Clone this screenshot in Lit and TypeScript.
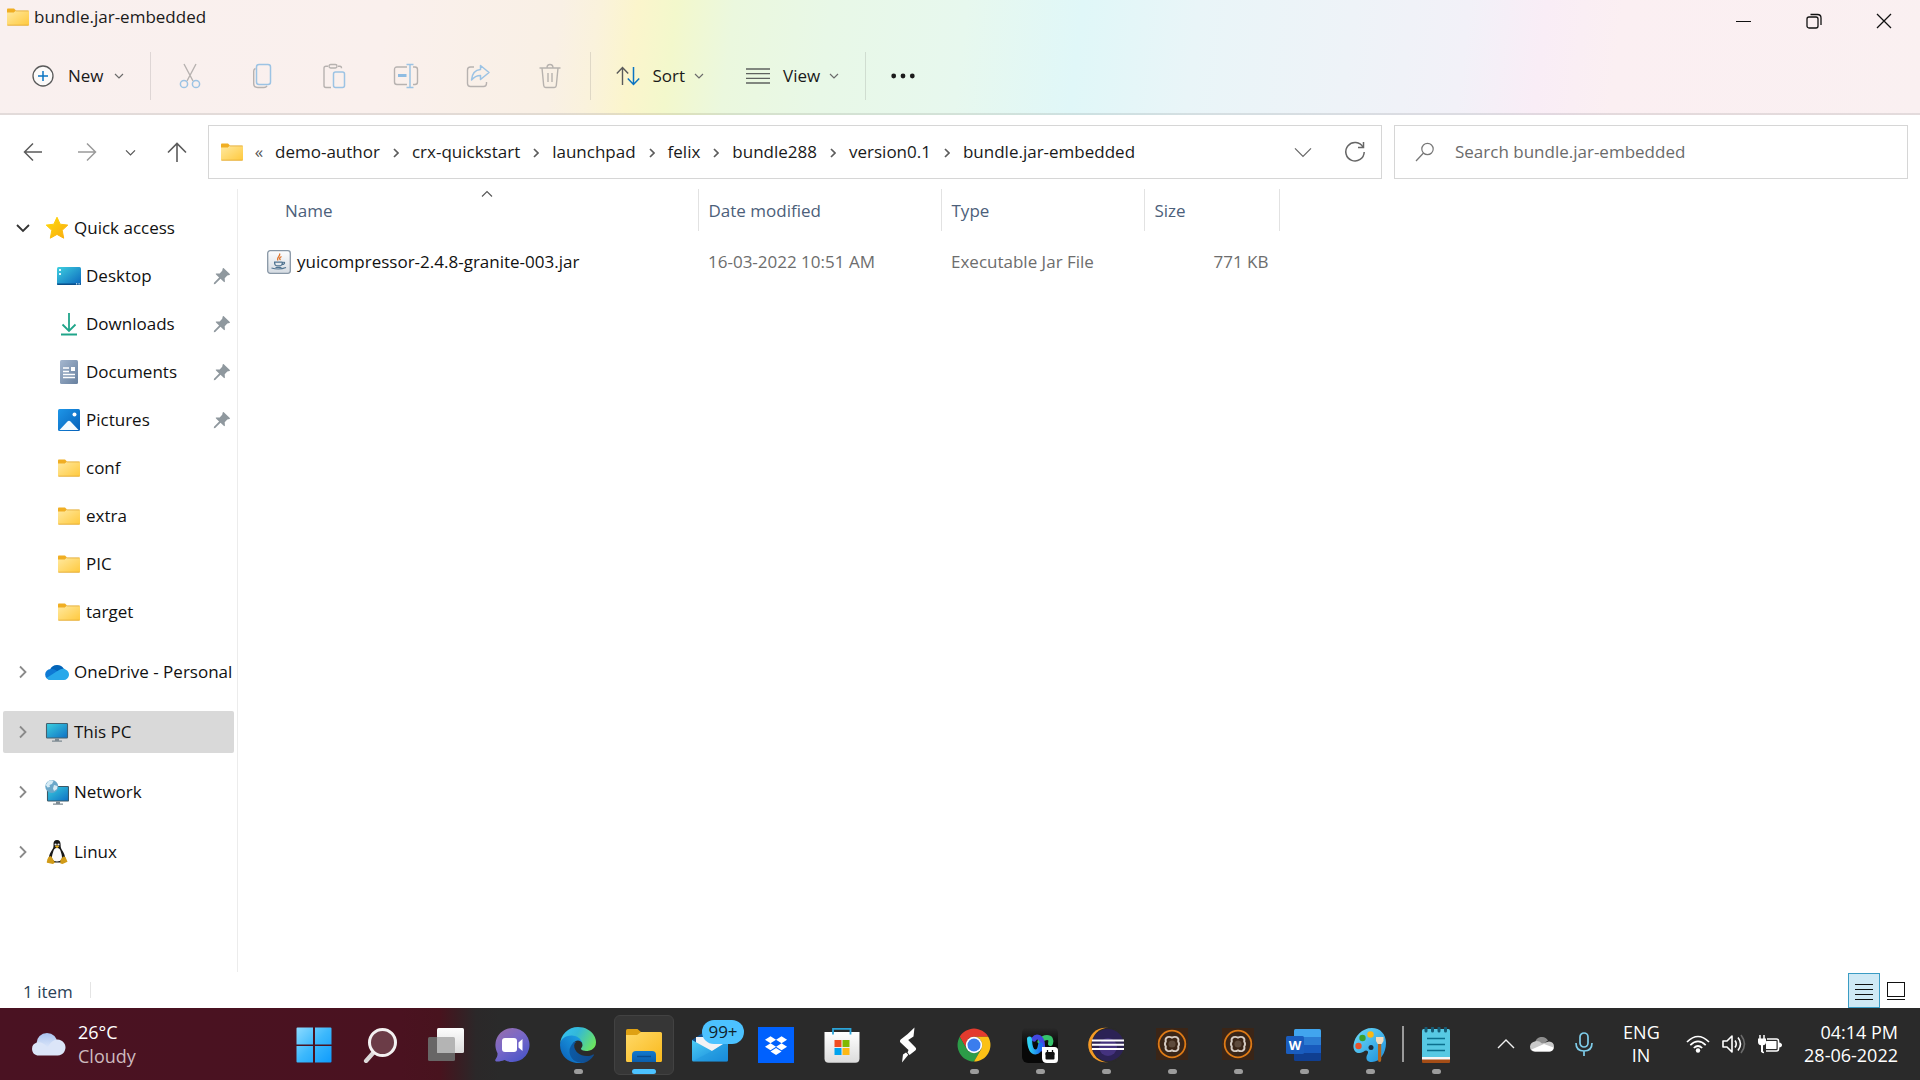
import { LitElement, html, css, svg, nothing, TemplateResult } from "lit";
import { customElement } from "lit/decorators.js";
import { classMap } from "lit/directives/class-map.js";

type Icon = TemplateResult;

const box = (w: number, h: number, body: unknown): Icon =>
  html`<svg width=${w} height=${h} viewBox="0 0 ${w} ${h}" fill="none" aria-hidden="true">${body}</svg>`;

/* ---------- shared glyphs ---------- */

const folder = () => box(22, 18, svg`
  <defs><linearGradient id="fold" x1="0" y1="0" x2="1" y2="1"><stop offset="0" stop-color="#ffe9a0"/><stop offset="1" stop-color="#ffc93d"/></linearGradient></defs>
  <path d="M0 1.2Q0 .4 .8 .4H7l2 2-2 2.6H0z" fill="#f0ae23"/>
  <path d="M0 4.4h7l1.6-1.7H21.200q.8 0 .8.8V16.800q0 .8-.8.8H.8q-.8 0-.8-.8z" fill="url(#fold)"/>
  <path d="M.4 17.200h21.200M8.600 2.900h13" stroke="#e0a733" stroke-width=".8"/>`);

const chevronDown = (size: number) => html`<svg width=${size} height=${size} viewBox="0 0 ${size} ${size}" fill="none" aria-hidden="true"><path d="M1 ${size * 0.3}L${size / 2} ${size * 0.3 + size / 2 - 1}L${size - 1} ${size * 0.3}" stroke="currentColor" stroke-width="1.200"/></svg>`;

const chevronRight = () => box(10, 14, svg`<path d="M2 1.500L7.500 7 2 12.500" stroke="#8a8a8a" stroke-width="1.800"/>`);

const crumbArrow = () => box(6, 10, svg`<path d="M1 1l4 4-4 4" stroke="#5c5c5c" stroke-width="1.700"/>`);

const pin = () => box(18, 18, svg`<path d="M10.800 1.200l6 5.700c.3.300.2.900-.3 1l-2.200.5-2.600 2.800.2 3.300c0 .6-.5.800-.9.500L7.500 11.800 2.200 17 .8 17.200l.2-1.400 5.100-5.200L3 7.400c-.4-.4-.2-.9.300-.9l3.400-.1 2.500-2.600.5-2.300c.1-.5.700-.7 1.100-.3z" fill="#8f989e"/>`);

/* ---------- command bar ---------- */

const iconNew = () => box(22, 22, svg`<circle cx="11" cy="11" r="10" stroke="#5a5a5a" stroke-width="1.300" fill="#fcfaf9"/><path d="M11 6v10M6 11h10" stroke="#0a74c2" stroke-width="1.500"/>`);
const iconCut = () => box(24, 26, svg`<path d="M6 1l9 17M18 1L9 18" stroke="#b7b2b0" stroke-width="1.400"/><circle cx="6" cy="21" r="3.600" stroke="#9cc3e4" stroke-width="1.500"/><circle cx="18" cy="21" r="3.600" stroke="#9cc3e4" stroke-width="1.500"/>`);
const iconCopy = () => box(24, 26, svg`<path d="M5.500 5.500C4 6 3.700 7 3.700 8v12.500q0 4 4 4H14q2 0 3-1.700" stroke="#b7b2b0" stroke-width="1.400"/><rect x="6.500" y="1.500" width="14" height="20" rx="2.500" stroke="#9cc3e4" stroke-width="1.500"/>`);
const iconPaste = () => box(24, 26, svg`<path d="M6 3.200H4Q2 3.200 2 5.200v17.300q0 2 2 2h5M16 3.200h2q1.500 0 1.500 2" stroke="#b7b2b0" stroke-width="1.400"/><rect x="7" y="1.500" width="8" height="3.500" rx="1.700" stroke="#b7b2b0" stroke-width="1.400"/><rect x="11.500" y="9" width="11" height="15.500" rx="2" stroke="#9cc3e4" stroke-width="1.500"/>`);
const iconRename = () => box(26, 26, svg`<path d="M14 4H4Q1.500 4 1.500 6.500v12.500q0 2.500 2.500 2.500h10M20 4h2q2.500 0 2.500 2.500v12.500q0 2.500-2.500 2.500h-2" stroke="#b7b2b0" stroke-width="1.400"/><path d="M13.500 1.500h7M13.500 24.500h7M17 1.500v23" stroke="#9cc3e4" stroke-width="1.500"/><path d="M5 12.500h8.500" stroke="#8fbce2" stroke-width="3"/>`);
const iconShare = () => box(26, 26, svg`<path d="M9 4H5.500Q2.500 4 2.500 7v13.500q0 3 3 3h13q3 0 3-3V19" stroke="#b7b2b0" stroke-width="1.400"/><path d="M15.500 2.500l8.500 7-8.500 7v-4c-4 0-6.500 1.500-9 4.500.5-6 3.500-10 9-10.500z" stroke="#9cc3e4" stroke-width="1.500" stroke-linejoin="round"/>`);
const iconDelete = () => box(24, 26, svg`<path d="M1.500 5h21M4 5l1.700 17.500q.2 2 2 2h8.600q1.800 0 2-2L20 5M9 5q0-3.500 3-3.500T15 5M10 10v9M14 10v9" stroke="#b7b2ae" stroke-width="1.400"/>`);
const iconSort = () => box(24, 20, svg`<path d="M6.500 19V1.500M.8 7.500l5.700-6 5.700 6" stroke="#5a5a5a" stroke-width="1.400"/><path d="M17.500 1v17.500M11.800 12.500l5.700 6 5.700-6" stroke="#0a74c2" stroke-width="1.500"/>`);
const iconView = () => box(24, 16, svg`<path d="M0 1h24M0 5.700h24M0 10.400h24M0 15h24" stroke="#5f625f" stroke-width="1.300"/>`);
const iconMore = () => box(24, 6, svg`<circle cx="2.700" cy="3" r="2.400" fill="#1b1b1b"/><circle cx="12" cy="3" r="2.400" fill="#1b1b1b"/><circle cx="21.300" cy="3" r="2.400" fill="#1b1b1b"/>`);

/* ---------- navigation row ---------- */

const iconBack = () => box(20, 20, svg`<path d="M19 10H1.500M10 1.500L1.500 10l8.500 8.500" stroke="#5b5b5b" stroke-width="1.500"/>`);
const iconForward = () => box(20, 20, svg`<path d="M1 10h17.500M10 1.500l8.500 8.500-8.500 8.500" stroke="#9a9a9a" stroke-width="1.500"/>`);
const iconUp = () => box(20, 20, svg`<path d="M10 20V1.500M1 10.500l9-9 9 9" stroke="#5b5b5b" stroke-width="1.600"/>`);
const iconRefresh = () => box(22, 22, svg`<path d="M19 6.200A9.200 9.200 0 1 0 20.200 11" stroke="#666" stroke-width="1.500"/><path d="M19.500 1v5.500H14" stroke="#666" stroke-width="1.500"/>`);
const iconSearch = () => box(20, 20, svg`<circle cx="12.500" cy="7" r="5.700" stroke="#777" stroke-width="1.200"/><path d="M8.500 11L1 19" stroke="#777" stroke-width="1.200"/>`);

/* ---------- tree ---------- */

const iconStar = () => box(24, 24, svg`<defs><linearGradient id="st" x1="0" y1="0" x2="1" y2="1"><stop offset="0" stop-color="#ffdb0a"/><stop offset="1" stop-color="#f9ab10"/></linearGradient></defs><path d="M12 1.200l3.200 7 7.600.9-5.600 5.200 1.500 7.900-6.700-3.800-6.700 3.800 1.500-7.900L1.200 9.100l7.600-.9z" fill="url(#st)" stroke="url(#st)" stroke-width="1" stroke-linejoin="round"/>`);
const iconDesktop = () => box(24, 20, svg`<defs><linearGradient id="dk" x1="0" y1="0" x2="1" y2="1"><stop offset="0" stop-color="#3ed0e0"/><stop offset="1" stop-color="#0b66bd"/></linearGradient></defs><rect y="1" width="24" height="18" rx="1.500" fill="url(#dk)"/><path d="M0 17.500h24v.5a1 1 0 0 1-1 1H1a1 1 0 0 1-1-1z" fill="#0a4f8a"/><path d="M2 3h2v2H2zM2 7h2v2H2zM19 17.300h1.200v1.200H19zM21.500 17.300h1.200v1.200h-1.200z" fill="#dff6ff"/>`);
const iconDownloads = () => box(24, 24, svg`<path d="M12 1v18M5.500 12.500l6.500 6.500 6.500-6.500M4 22.500h16" stroke="#20a58a" stroke-width="1.800"/>`);
const iconDocuments = () => box(24, 24, svg`<defs><linearGradient id="dc" x1="0" y1="0" x2="1" y2="1"><stop offset="0" stop-color="#a5b7cf"/><stop offset="1" stop-color="#67809f"/></linearGradient></defs><rect x="3" width="18" height="24" rx="1.500" fill="url(#dc)"/><path d="M6 8h6M6 11.500h6M6 14.500h12M6 17.500h12" stroke="#fff" stroke-width="1.300"/><rect x="14" y="7" width="4" height="4" fill="#fff"/>`);
const iconPictures = () => box(24, 24, svg`<defs><linearGradient id="pc" x1="0" y1="0" x2="1" y2="1"><stop offset="0" stop-color="#1e96e8"/><stop offset="1" stop-color="#0560b8"/></linearGradient></defs><rect x="1" y="1" width="22" height="22" rx="1.500" fill="url(#pc)"/><path d="M2.500 22l8-8.600q1.500-1.500 3 0l8 8.600z" fill="#f4fafe"/><circle cx="17.500" cy="6.500" r="2" fill="#fff"/>`);
const iconOneDrive = () => box(24, 16, svg`<path d="M5 5.500A8 8 0 0 1 19 5l-5 6z" fill="#0364b8"/><path d="M5.500 5.100c2-.3 3.600.1 5 .9l6 4-11 5.800A5.300 5.300 0 0 1 5.500 5.100z" fill="#0f7ad4"/><path d="M12 7.300l3.500-2c2.500-1.200 5-.2 5.300.500 2.500 1 3.700 3.700 3 6.200-.6 2.400-2.600 3.900-4.800 3.900H5.300c-1.600 0-2.800-.7-3.800-1.900z" fill="#28a8ea"/>`);
const monitor = svg`<defs><linearGradient id="mo" x1="0" y1="0" x2="1" y2="1"><stop offset="0" stop-color="#3bd0df"/><stop offset="1" stop-color="#0e6fc4"/></linearGradient></defs>`;
const iconPC = () => box(24, 20, svg`${monitor}<rect x="1.500" y="1.500" width="21" height="14.500" rx=".8" fill="url(#mo)" stroke="#45606f" stroke-width="1.100"/><path d="M10 16.500h4v2h3v1.200H7v-1.200h3z" fill="#7e8a92"/>`);
const iconNetwork = () => box(24, 26, svg`${monitor}<rect x="2.500" y="7.500" width="21" height="14.500" rx=".8" fill="url(#mo)" stroke="#3b5868" stroke-width="1.100"/><path d="M11 22.500h4v2h3v1.200H8v-1.200h3z" fill="#7e8a92"/><circle cx="6.800" cy="7.500" r="6.500" fill="#6aa7c9"/><path d="M3 2.500q3-2 5.500-.5L7 5 4.500 6 5 8l-2.500.5L.8 6zM9 6l3.500 1-.5 3-3 2-1-2.500z" fill="#d6ebf5"/>`);
const iconLinux = () => box(24, 26, svg`<path d="M12 1c-2.600 0-3.700 2-3.500 4.500.2 2.600-.3 3.800-1.800 6C5.200 13.700 4 16 4 19l3 4.500h10L20 19c0-3-1.200-5.300-2.700-7.500-1.400-2.200-1.700-3.400-1.700-6C15.600 3 14.600 1 12 1z" fill="#171717"/><path d="M12 9c-2.500 0-3.500 2-4 4.500-.8 2.500-1.600 5-.5 7 1.200 2.500 7.800 2.500 9 0 1-2 .3-4.500-.5-7C15.500 11 14.500 9 12 9z" fill="#fbfbfb"/><circle cx="10.600" cy="5.500" r="1.100" fill="#eee"/><circle cx="13.500" cy="5.500" r="1.100" fill="#eee"/><path d="M9.800 7.300L12 6.200l2.300 1.100L12 9.200z" fill="#e3ad1c"/><path d="M3.500 18l2.500-1 4 6.500-2 1.500-6-1.200c-.7-.4.300-1.700.2-3zM20.500 18L18 17.500l-2.800 4 .3 3 2 .5 5-2.200z" fill="#d19b18"/>`);
const iconJar = () => box(24, 24, svg`<defs><linearGradient id="jr" x1="0" y1="0" x2="0" y2="1"><stop offset="0" stop-color="#fdfdfe"/><stop offset="1" stop-color="#d5dbe2"/></linearGradient></defs><rect x=".7" y=".7" width="22.600" height="22.600" rx="2.500" fill="url(#jr)" stroke="#8897a6" stroke-width="1.300"/><path d="M12.500 3.500c1.500 2.500-3.500 4-1.500 7M14.500 6.500c-2 1-2.500 2-1 3.500" stroke="#e0762e" stroke-width="1.300"/><path d="M7 12.200h8.500M7.500 12.500q.3 3.300 2.500 3.300h3q2 0 2.500-3.300M15.500 12.500q2.500-.8 2 .7t-2.700 1.400M4.500 18q7.500 2.200 14.500-.5M8.500 17.500h6" stroke="#4f7390" stroke-width="1.200"/>`);

/* ---------- taskbar apps, each on a 36px grid ---------- */

const appStart = () => box(36, 36, svg`<defs><linearGradient id="wn" x1="0" y1="0" x2="36" y2="36" gradientUnits="userSpaceOnUse"><stop offset="0" stop-color="#8fdcff"/><stop offset=".5" stop-color="#3cb8fc"/><stop offset="1" stop-color="#0d9afc"/></linearGradient></defs><path d="M1.500.500H17v17H.5v-16a1 1 0 0 1 1-1zM19 .5h15.500a1 1 0 0 1 1 1v16H19zM.5 19H17v16.500H1.500a1 1 0 0 1-1-1zM19 19h16.500v15.500a1 1 0 0 1-1 1H19z" fill="url(#wn)"/>`);
const appSearch = () => box(36, 36, svg`<path d="M11.500 25.500L4 34" stroke="#dcdada" stroke-width="4.200" stroke-linecap="round"/><circle cx="20.500" cy="15.500" r="13" fill="#6b3c47" stroke="#f3f1f1" stroke-width="3"/>`);
const appTasks = () => box(36, 36, svg`<defs><linearGradient id="tv" x1="0" y1="0" x2="0" y2="1"><stop offset="0" stop-color="#fdfdfd"/><stop offset="1" stop-color="#dcdcdc"/></linearGradient></defs><rect y="10" width="27" height="24" rx="1.500" fill="#686666"/><rect x="9" y="1" width="27" height="25" rx="1.500" fill="url(#tv)"/><path d="M9 10h16.500a1.500 1.500 0 0 1 1.500 1.500V26H10.500A1.500 1.500 0 0 1 9 24.500z" fill="#b4b4b4"/>`);
const appChat = () => box(36, 36, svg`<defs><linearGradient id="ch" x1="0" y1="0" x2=".7" y2="1"><stop offset="0" stop-color="#9a6fa8"/><stop offset=".5" stop-color="#7a68c8"/><stop offset="1" stop-color="#4c56c8"/></linearGradient></defs><path d="M18.500 1a17 17 0 1 1-8 32c-3 1.200-6 1.800-8.300 1.400C1 34.200 1 33 1.600 32.200c1.500-2 2-3.800 1.900-6A17 17 0 0 1 18.500 1z" fill="url(#ch)"/><rect x="8" y="11" width="15" height="14" rx="3" fill="#fff"/><path d="M24.500 15.500L28.500 12v12l-4-3.500z" fill="#fff"/>`);
const appEdge = () => html`<svg width="36" height="36" viewBox="0 0 256 256" aria-hidden="true">
  <defs><linearGradient id="e1" x1=".1" y1=".5" x2="1" y2=".6"><stop offset="0" stop-color="#0c59a4"/><stop offset="1" stop-color="#114a8b"/></linearGradient>
  <linearGradient id="e2" x1=".9" y1=".2" x2=".2" y2="1"><stop offset="0" stop-color="#1b9de2"/><stop offset=".5" stop-color="#1481cf"/><stop offset="1" stop-color="#0b62ba"/></linearGradient>
  <linearGradient id="e3" x1="0" y1=".3" x2="1" y2=".7"><stop offset="0" stop-color="#35c1f1"/><stop offset=".4" stop-color="#33b8d8"/><stop offset="1" stop-color="#6ee65c"/></linearGradient></defs>
  <path fill="url(#e1)" d="M235.700 195.500a93.700 93.700 0 0 1-10.500 4.700 101.900 101.900 0 0 1-35.900 6.400c-47.300 0-88.500-32.500-88.500-74.300a31.500 31.500 0 0 1 16.400-27.300c-42.800 1.800-53.800 46.400-53.800 72.500 0 74 68.100 81.400 82.800 81.400 7.900 0 19.800-2.300 27-4.600l1.300-.4a128.300 128.300 0 0 0 66.600-52.800 4 4 0 0 0-5.400-5.600z"/>
  <path fill="url(#e2)" d="M105.700 241.400a79.200 79.200 0 0 1-22.700-21.300 80.700 80.700 0 0 1 29.500-120c3.200-1.500 8.500-4.100 15.600-4a32.400 32.400 0 0 1 25.700 13 31.900 31.900 0 0 1 6.300 18.700c0-.2 24.500-79.600-80-79.600-43.900 0-80 41.600-80 78.200a130.200 130.200 0 0 0 12.100 56 128 128 0 0 0 156.400 67 75.500 75.500 0 0 1-62.800-8z"/>
  <path fill="url(#e3)" d="M152.300 148.900c-.8 1-3.300 2.500-3.300 5.700 0 2.600 1.700 5.100 4.700 7.200 14.400 10 41.500 8.700 41.600 8.700a59.600 59.600 0 0 0 30.300-8.300A61.400 61.400 0 0 0 256 109.200c.3-22.400-8-37.300-11.300-43.900C223.500 23.900 177.700 0 128 0A128 128 0 0 0 0 126.200c.5-36.500 36.800-66 80-66 3.500 0 23.500.3 42 10a72.600 72.600 0 0 1 30.900 29.300c6.100 10.600 7.200 24.100 7.200 29.500s-2.700 13.300-7.800 19.900z"/></svg>`;
const appExplorer = () => box(36, 36, svg`<defs><linearGradient id="ex" x1="0" y1="0" x2="1" y2="1"><stop offset="0" stop-color="#ffd968"/><stop offset="1" stop-color="#f9b91c"/></linearGradient><linearGradient id="ex2" x1="0" y1="0" x2="0" y2="1"><stop offset="0" stop-color="#1279ce"/><stop offset="1" stop-color="#0b5fae"/></linearGradient></defs><path d="M0 3.500Q0 2 1.500 2h10l4 3.500V12H0z" fill="#dfa113"/><path d="M0 8h11l4-3h19.500Q36 5 36 6.500v27q0 1.500-1.500 1.500h-33Q0 35 0 33.500z" fill="url(#ex)"/><path d="M6 35v-7q0-4 4-4h16q4 0 4 4v7z" fill="url(#ex2)"/><path d="M11 29.500h14" stroke="#0a4c8e" stroke-width="1.400"/>`);
const appMail = () => box(36, 36, svg`<defs><linearGradient id="ml" x1="0" y1="0" x2="1" y2="1"><stop offset="0" stop-color="#4ccdf5"/><stop offset="1" stop-color="#1283d8"/></linearGradient></defs><path d="M0 13L12 5h12l12 8v6H0z" fill="#0f4f8c"/><path d="M4 10h28v10l-13 6L4 16z" fill="#f2f2f4"/><path d="M0 13l20 11L36 14v19q0 1.500-1.500 1.500h-33Q0 34.500 0 33z" fill="url(#ml)"/><path d="M1 34L20 24 36 14v19q0 1.500-1.500 1.500z" fill="#1f95dc" opacity=".45"/>`);
const appDropbox = () => box(36, 36, svg`<rect width="36" height="36" fill="#0061fe"/><g transform="translate(7 7.500) scale(.92)"><path fill="#fff" d="M6 1.807L0 5.629l6 3.822 6.001-3.822zM18 1.807l-6 3.822 6 3.822 6-3.822zM0 13.274l6 3.822 6.001-3.822L6 9.452zM18 9.452l-6 3.822 6 3.822 6-3.822zM6 18.371l6.001 3.822 6-3.822-6-3.822z"/></g>`);
const appStore = () => box(36, 36, svg`<defs><linearGradient id="sr" x1="0" y1="0" x2="0" y2="1"><stop offset="0" stop-color="#fff"/><stop offset="1" stop-color="#dcdcdc"/></linearGradient></defs><path d="M.5 5h35v26.500q0 4.200-4.200 4.200H4.700q-4.200 0-4.200-4.200z" fill="url(#sr)"/><path d="M9 7.500V1.800h17.500v5.700" stroke="#2ba4d9" stroke-width="1.800"/><path fill="#f04e23" d="M10.500 13h7v7h-7z"/><path fill="#80b900" d="M18.500 13h7v7h-7z"/><path fill="#00a3ee" d="M10.500 21h7v7h-7z"/><path fill="#fdb813" d="M18.500 21h7v7h-7z"/>`);
const appSwift = () => box(36, 36, svg`<path fill="#fff" d="M24.500.500l-1 9-5.300 3.500 7.300 7.500c.9 1 .8 2-.2 3l-5.800 4.500-2-2.500 1-2.500L10.500 15.500c-.8-1-.7-2 .2-3l7-5.500zM12 35.500l1-8 3-2 2.300 2.200z"/>`);
const appChrome = () => html`<svg width="36" height="36" viewBox="0 0 48 48" aria-hidden="true"><path fill="#e33b2e" d="M24 13h19A22 22 0 0 0 5 13l9.500 16.500A11 11 0 0 1 24 13z"/><path fill="#2c9c48" d="M14.500 29.500L5 13a22 22 0 0 0 19 33l9.500-16.500a11 11 0 0 1-19 0z"/><path fill="#fbc116" d="M33.500 29.500L24 46a22 22 0 0 0 19-33H24a11 11 0 0 1 9.500 16.500z"/><circle cx="24" cy="24" r="11" fill="#fff"/><circle cx="24" cy="24" r="8.700" fill="#3b7ded"/></svg>`;
const appWebex = () => box(36, 36, svg`<defs><linearGradient id="wx" x1="0" y1="0" x2="0" y2="1"><stop offset="0" stop-color="#2b2b2b"/><stop offset=".5" stop-color="#080808"/></linearGradient><linearGradient id="wy" x1="0" y1="0" x2="1" y2="0"><stop offset="0" stop-color="#2fd0f2"/><stop offset="1" stop-color="#1a6df0"/></linearGradient></defs><rect width="36" height="36" rx="6" fill="url(#wx)"/>
  <path d="M18 14.500q3-4 7-4 5 0 3.500 6" stroke="#35c46c" stroke-width="5" stroke-linecap="round"/>
  <path d="M12 12q2-3 5-1.500 3.500 2 3.500 8 0 5 3 6" stroke="#4348e0" stroke-width="5" stroke-linecap="round"/>
  <path d="M7.500 12q.5 13 6 13 4 0 5-7" stroke="url(#wy)" stroke-width="5" stroke-linecap="round"/>
  <path d="M20 20h12.500q3.500 0 3.500 3.500v9q0 3.500-3.500 3.500H25q-5 0-5-5z" fill="#fff"/><rect x="23.500" y="25" width="9" height="7.500" rx="1" fill="#111"/><path d="M25.500 23v2M30.500 23v2M23.500 27h9" stroke="#111" stroke-width="1.300"/>`);
const appEclipse = () => box(36, 36, svg`<circle cx="17.500" cy="18" r="17.300" fill="#f59a26"/><circle cx="20.700" cy="18" r="17.300" fill="#2a2a2a"/><circle cx="20" cy="18" r="16" fill="#2c2255"/><circle cx="20" cy="20" r="9" fill="#44327e"/><path d="M4 13.500H36M4 17.800h32M4 22H36" stroke="#fff" stroke-width="2"/>`);
const appQuickstart = () => box(36, 36, svg`<rect x="2" y="1" width="32" height="32" fill="#3a2517"/><circle cx="18" cy="17" r="13.300" stroke="#dd7a16" stroke-width="1.800"/><circle cx="18" cy="17" r="3.600" fill="#5d4a3c"/><path d="M13.500 10.200q2-.9 4.500.5 2.500-1.400 4.500-.5 2.700 1.300 1.700 4.300 1.800 2.500 0 5 1 3-1.700 4.300-2 .9-4.500-.5-2.500 1.400-4.500.5-2.700-1.300-1.700-4.300-1.800-2.500 0-5-1-3 1.700-4.300z" stroke="#d6ccc4" stroke-width="1.900"/>`);
const appWord = () => box(36, 36, svg`<path d="M8 10V3.500Q8 2 9.500 2h24Q35 2 35 3.500V10z" fill="#41a5ee"/><path d="M8 10h27v8H8z" fill="#2b7cd3"/><path d="M8 18h27v8H8z" fill="#185abd"/><path d="M8 26h27v6.500q0 1.500-1.500 1.500h-24Q8 34 8 32.500z" fill="#103f91"/><rect y="9" width="18" height="18" rx="1.500" fill="#1a5dbe"/><text x="9" y="23" text-anchor="middle" font-family="Open Sans, sans-serif" font-weight="700" font-size="13" fill="#fff">W</text>`);
const appPaint = () => box(36, 36, svg`<defs><linearGradient id="pn" x1="0" y1="0" x2="1" y2="1"><stop offset="0" stop-color="#6fdcf9"/><stop offset="1" stop-color="#1b8fdc"/></linearGradient></defs><path d="M20 1c8 0 14 6 14 15 0 10-6 19-14 19-4 0-6-2-5.500-5 .4-2.500 2.500-4.500 1-6-2-2-4 1.500-7.500 2-4.500.5-7-3-6.500-8C2.500 9 10 1 20 1z" fill="url(#pn)"/><circle cx="6.500" cy="19" r="3.200" fill="#e8522a"/><circle cx="10.500" cy="11" r="3.200" fill="#3aa12c"/><circle cx="18.500" cy="7.500" r="3.200" fill="#fcb813"/><circle cx="19" cy="20.500" r="2.500" fill="#1b2d3d"/><path d="M26 16h3.200v17q0 2-1.600 2T26 33z" fill="#b4651d"/><path d="M24 10h7.500v4l-1.800 3h-4L24 14z" fill="#f1dcc0"/>`);
const appNotepad = () => box(36, 36, svg`<rect x="4" y="31" width="28" height="5" rx="1" fill="#a44d16"/><path d="M4 28h28v4.500H4z" fill="#f6f6f6"/><path d="M4 3.500Q4 2 5.500 2h25Q32 2 32 3.500V30H4z" fill="#57c9e3"/><path d="M9 11.500h18M9 17.500h18M9 23.500h18" stroke="#0b6f8d" stroke-width="1.700"/><path d="M8 1v3M14.500 1v3M21 1v3M27.500 1v3" stroke="#155b75" stroke-width="3" stroke-linecap="round"/>`);

/* ---------- tray ---------- */

const weatherCloud = () => box(36, 24, svg`<defs><linearGradient id="wc" x1="0" y1="0" x2="0" y2="1"><stop offset="0" stop-color="#a9c3f0"/><stop offset="1" stop-color="#f2f6fd"/></linearGradient></defs><circle cx="17" cy="11.500" r="10.500" fill="url(#wc)"/><path d="M7 10.500a6.700 6.700 0 0 0 .2 13h20.500a8 8 0 1 0-5.500-14c-2 1.500-3 3-4.500 6C15 12 11 9.800 7 10.500z" fill="#dbe5f8"/>`);
const trayCaret = () => box(18, 10, svg`<path d="M1 9l8-8 8 8" stroke="#f2f2f2" stroke-width="1.400"/>`);
const trayCloud = () => box(24, 16, svg`<path d="M5 7A7 7 0 0 1 18 4.500l-6 4z" fill="#8e8e8e"/><path d="M5.500 5.200q3.500-.6 6.500 2.300l7-2q5 .5 5 5t-4.500 5H5Q0 15.500 0 10.500q.5-4.500 5.500-5.300z" fill="#c9c9c9"/><path d="M1.500 13.500L14 8l9.500 3.500q-.5 4-4 4H5q-2 0-3.500-2z" fill="#fff"/>`);
const trayMic = () => box(18, 24, svg`<rect x="5" y="1" width="8" height="14" rx="4" stroke="#7fcdea" stroke-width="1.700"/><path d="M1 11q0 8 8 8t8-8M9 19v5" stroke="#7fcdea" stroke-width="1.700"/>`);
const trayWifi = () => box(24, 18, svg`<path d="M1 7Q12-4 23 7M4.300 10.200q7.700-7.500 15.400 0M7.800 13q4.200-4 8.400 0" stroke="#fff" stroke-width="1.700"/><circle cx="12" cy="15.500" r="2.200" fill="#fff"/>`);
const trayVolume = () => box(24, 20, svg`<path d="M1 7h4l5-5v16l-5-5H1z" stroke="#fff" stroke-width="1.600" stroke-linejoin="round"/><path d="M13 6.500q2.500 3.500 0 7M16 3.500q5 6.500 0 13" stroke="#fff" stroke-width="1.600"/><path d="M19 1q7 9 0 18" stroke="#6b6b6b" stroke-width="1.600"/>`);
const trayBattery = () => box(24, 20, svg`<path d="M9 5h9.500q2 0 2 2v8q0 2-2 2H8" stroke="#fff" stroke-width="1.600"/><rect x="8" y="7" width="10.500" height="8" rx=".5" fill="#fff"/><path d="M21 8.500q3 .5 3 2.500t-3 2.500z" fill="#fff"/><path d="M0 4.500h8V8q0 3-3 3.300V18H3v-6.700Q0 11 0 8z" fill="#fff"/><path d="M2 1v4M6 1v4M4 17q0 1.500 2 1.500" stroke="#fff" stroke-width="1.500"/>`);
const iconDetails = () => box(18, 18, svg`<path d="M0 2.500h18M0 7.500h18M0 12.500h18M0 17.500h18" stroke="#111" stroke-width="1"/>`);
const iconThumbs = () => box(18, 18, svg`<rect x=".5" y=".5" width="17" height="14" stroke="#111"/><path d="M0 17.500h18" stroke="#111"/>`);

interface TreeItem { label: string; icon: () => Icon; pinned?: boolean; group?: "open" | "closed"; selected?: boolean }

const TREE: TreeItem[] = [
  { label: "Quick access", icon: iconStar, group: "open" },
  { label: "Desktop", icon: iconDesktop, pinned: true },
  { label: "Downloads", icon: iconDownloads, pinned: true },
  { label: "Documents", icon: iconDocuments, pinned: true },
  { label: "Pictures", icon: iconPictures, pinned: true },
  { label: "conf", icon: folder },
  { label: "extra", icon: folder },
  { label: "PIC", icon: folder },
  { label: "target", icon: folder },
  { label: "OneDrive - Personal", icon: iconOneDrive, group: "closed" },
  { label: "This PC", icon: iconPC, group: "closed", selected: true },
  { label: "Network", icon: iconNetwork, group: "closed" },
  { label: "Linux", icon: iconLinux, group: "closed" },
];

const PATH = ["demo-author", "crx-quickstart", "launchpad", "felix", "bundle288", "version0.1", "bundle.jar-embedded"];

const FILES = [
  { name: "yuicompressor-2.4.8-granite-003.jar", date: "16-03-2022 10:51 AM", type: "Executable Jar File", size: "771 KB" },
];

const EDIT_TOOLS: [string, () => Icon][] = [
  ["Cut", iconCut], ["Copy", iconCopy], ["Paste", iconPaste],
  ["Rename", iconRename], ["Share", iconShare], ["Delete", iconDelete],
];

interface App { name: string; icon: () => Icon; state?: "running" | "active"; badge?: string; divided?: boolean }

const APPS: App[] = [
  { name: "Start", icon: appStart },
  { name: "Search", icon: appSearch },
  { name: "Task view", icon: appTasks },
  { name: "Chat", icon: appChat },
  { name: "Edge", icon: appEdge, state: "running" },
  { name: "File Explorer", icon: appExplorer, state: "active" },
  { name: "Mail", icon: appMail, badge: "99+" },
  { name: "Dropbox", icon: appDropbox },
  { name: "Store", icon: appStore },
  { name: "Shortcuts", icon: appSwift },
  { name: "Chrome", icon: appChrome, state: "running" },
  { name: "Webex", icon: appWebex, state: "running" },
  { name: "Eclipse", icon: appEclipse, state: "running" },
  { name: "Author server", icon: appQuickstart, state: "running" },
  { name: "Publish server", icon: appQuickstart, state: "running" },
  { name: "Word", icon: appWord, state: "running" },
  { name: "Paint", icon: appPaint, state: "running" },
  { name: "Notepad", icon: appNotepad, state: "running", divided: true },
];

const reset = css`
  * { box-sizing: border-box; }
  button, input { font: inherit; color: inherit; background: none; border: 0; padding: 0; margin: 0; }
  button { display: flex; align-items: center; justify-content: center; }
  a { color: inherit; text-decoration: none; }
  svg { display: block; flex: none; }
`;

@customElement("explorer-header")
class ExplorerHeader extends LitElement {
  static styles = [reset, css`
    :host {
      display: block;
      border-bottom: 2px solid rgba(90, 90, 90, 0.14);
      background: linear-gradient(97deg, #f9f0ef 0%, #faf0ed 20%, #f9f0e5 29%, #faf2dc 31%, #fbf5cc 33%, #f3f8cc 35%, #ebf8de 38%, #e8f8e7 43%, #e7f8ee 50%, #e0f7f8 56%, #e9f5f8 62%, #eef3f8 70%, #f2f1f8 76%, #f9edf6 80%, #fbeff2 84%, #faf0f1 100%);
    }
    .title-bar { display: flex; justify-content: space-between; height: 38px; padding-left: 7px; }
    h1 { display: flex; align-items: center; gap: 5px; height: 34px; margin: 0; font-size: 17px; font-weight: 400; }
    .window { display: flex; padding-right: 1px; }
    .window button { width: 70px; height: 42px; }
    .commands { display: flex; align-items: center; height: 75px; padding-left: 32px; }
    .menu { gap: 14px; }
    .menu svg:last-child { margin-left: -4px; color: #6b6b6b; }
    .rule { width: 1px; height: 48px; background: rgba(90, 90, 90, 0.17); }
    .tools { display: flex; padding: 0 4px 0 3px; }
    .tools button { width: 72px; height: 48px; }
    .new { margin-right: 26px; }
    .sort { gap: 13px; margin: 0 42px 0 25px; }
    .view { gap: 13px; margin-right: 26px; }
    .more { width: 74px; height: 48px; }
  `];

  render() {
    return html`
      <div class="title-bar">
        <h1>${folder()}<span>bundle.jar-embedded</span></h1>
        <div class="window">
          <button aria-label="Minimize">${box(16, 16, svg`<path d="M0 8.500h15" stroke="#111"/>`)}</button>
          <button aria-label="Restore">${box(16, 16, svg`<rect x="1" y="4" width="11" height="11" rx="2" stroke="#111" stroke-width="1.300"/><path d="M4.500 1.500h7q3.500 0 3.500 3.500v7" stroke="#111" stroke-width="1.300"/>`)}</button>
          <button aria-label="Close">${box(16, 16, svg`<path d="M1 1l14 14M15 1L1 15" stroke="#111" stroke-width="1.300"/>`)}</button>
        </div>
      </div>
      <div class="commands">
        <button class="menu new">${iconNew()}<span>New</span>${chevronDown(10)}</button>
        <div class="rule"></div>
        <div class="tools">${EDIT_TOOLS.map(([name, icon]) => html`<button aria-label=${name} disabled>${icon()}</button>`)}</div>
        <div class="rule"></div>
        <button class="menu sort">${iconSort()}<span>Sort</span>${chevronDown(10)}</button>
        <button class="menu view">${iconView()}<span>View</span>${chevronDown(10)}</button>
        <div class="rule"></div>
        <button class="more" aria-label="See more">${iconMore()}</button>
      </div>`;
  }
}

@customElement("explorer-address")
class ExplorerAddress extends LitElement {
  static styles = [reset, css`
    :host { display: grid; grid-template-columns: 184px 1174fr 514fr; column-gap: 12px; padding: 10px 12px; }
    .history { display: flex; align-items: center; }
    .history button { height: 40px; }
    .back { width: 42px; }
    .forward { width: 66px; }
    .recent { width: 20px; color: #555; }
    .up { width: 38px; margin-left: 18px; }
    .field { display: flex; align-items: center; height: 54px; border: 1px solid #d6d6d6; background: #fff; min-width: 0; }
    .path { padding-left: 12px; }
    .path ol { display: flex; align-items: center; flex: 1; margin: 0; padding: 0; list-style: none; }
    .path li { display: flex; align-items: center; }
    .path li svg { margin: 2px 13px 0 13px; }
    .overflow { width: 32px; color: #555; text-align: center; }
    .path button { width: 52px; height: 52px; color: #666; }
    .search { padding: 0 20px; gap: 20px; }
    .search input { flex: 1; min-width: 0; outline: 0; }
    .search input::placeholder { color: #6b6b6b; opacity: 1; }
  `];

  render() {
    return html`
      <div class="history">
        <button class="back" aria-label="Back">${iconBack()}</button>
        <button class="forward" aria-label="Forward">${iconForward()}</button>
        <button class="recent" aria-label="Recent locations">${chevronDown(11)}</button>
        <button class="up" aria-label="Up">${iconUp()}</button>
      </div>
      <nav class="field path" aria-label="Address">
        ${folder()}<span class="overflow">«</span>
        <ol>${PATH.map((part, i) => html`<li>${i ? crumbArrow() : nothing}<a href="#">${part}</a></li>`)}</ol>
        <button aria-label="Previous locations">${chevronDown(18)}</button>
        <button aria-label="Refresh">${iconRefresh()}</button>
      </nav>
      <label class="field search">${iconSearch()}<input type="text" aria-label="Search" placeholder="Search bundle.jar-embedded"></label>`;
  }
}

@customElement("explorer-tree")
class ExplorerTree extends LitElement {
  static styles = [reset, css`
    :host { display: block; width: 238px; border-right: 1px solid #ececec; padding: 18px 3px 0; }
    ul { margin: 0; padding: 0; list-style: none; }
    li { margin-bottom: 6px; }
    a { display: flex; align-items: center; height: 42px; border-radius: 2px; padding-left: 54px; white-space: nowrap; color: #111; }
    .group { padding-left: 15px; }
    .closed { margin-top: 18px; }
    .selected { background: #d9d9d9; }
    .twisty { display: flex; justify-content: flex-start; width: 27px; color: #333; }
    .open .twisty { margin-left: -2px; width: 29px; }
    .icon { display: flex; justify-content: center; width: 24px; margin-right: 5px; }
    .label { flex: 1; }
    .pin { padding-right: 3px; }
  `];

  render() {
    return html`<nav aria-label="Folders"><ul>${TREE.map(item => html`
      <li class=${classMap({ closed: item.group === "closed" })}>
        <a href="#" class=${classMap({ group: !!item.group, open: item.group === "open", selected: !!item.selected })}>
          ${item.group ? html`<span class="twisty">${item.group === "open" ? box(14, 10, svg`<path d="M1 2l6 6 6-6" stroke="#333" stroke-width="1.800"/>`) : chevronRight()}</span>` : nothing}
          <span class="icon">${item.icon()}</span>
          <span class="label">${item.label}</span>
          ${item.pinned ? html`<span class="pin">${pin()}</span>` : nothing}
        </a>
      </li>`)}</ul></nav>`;
  }
}

@customElement("explorer-files")
class ExplorerFiles extends LitElement {
  static styles = [reset, css`
    :host { display: block; flex: 1; padding-left: 19px; }
    table { border-collapse: collapse; table-layout: fixed; width: 1023px; }
    th { position: relative; height: 42px; padding: 1px 10px 0; border-right: 1px solid #e2e2e2; font-weight: 400; text-align: left; color: #4c607a; }
    .name { width: 441px; padding-left: 28px; }
    .date { width: 243px; }
    .type { width: 203px; }
    .sorted { position: absolute; top: 1px; left: 224px; }
    td { height: 60px; padding: 2px 10px 0; color: #6d6d6d; }
    .file { display: flex; align-items: center; gap: 6px; color: #111; }
    .size { text-align: right; padding-right: 11px; }
  `];

  render() {
    return html`<table>
      <thead><tr>
        <th class="name" scope="col" aria-sort="ascending">Name<span class="sorted">${box(12, 8, svg`<path d="M1 6.500l5-5 5 5" stroke="#555" stroke-width="1.100"/>`)}</span></th>
        <th class="date" scope="col">Date modified</th>
        <th class="type" scope="col">Type</th>
        <th scope="col">Size</th>
      </tr></thead>
      <tbody>${FILES.map(f => html`<tr>
        <td><a class="file" href="#">${iconJar()}<span>${f.name}</span></a></td>
        <td>${f.date}</td><td>${f.type}</td><td class="size">${f.size}</td>
      </tr>`)}</tbody>
    </table>`;
  }
}

@customElement("desktop-taskbar")
class DesktopTaskbar extends LitElement {
  static styles = [reset, css`
    :host { display: grid; grid-template-columns: 284px auto 1fr; align-items: center; height: 72px; font-size: 18px; line-height: 24px; color: #fff; background: linear-gradient(90deg, #4a1222 0, #4a1220 400px, #48131e 440px, #3a1c22 456px, #2b2829 476px, #2a2a2a 500px); }
    .weather { justify-content: flex-start; gap: 12px; padding: 0 0 0 30px; text-align: left; }
    .weather span { display: block; }
    .sky { color: #cdb9be; }
    .apps { display: flex; align-items: center; gap: 6px; }
    .app { position: relative; width: 60px; height: 60px; border-radius: 6px; margin-top: 2px; }
    .active { background: #363636; border: 1px solid #424242; }
    .mark { position: absolute; bottom: 1px; width: 9px; height: 5px; border-radius: 3px; background: #9c9c9c; }
    .active .mark { width: 24px; background: #4cc2ff; bottom: 0; }
    .badge { position: absolute; left: 22px; top: 5px; width: 42px; height: 24px; border-radius: 12px; background: #4cc2ff; color: #10222c; text-align: center; font-size: 17px; line-height: 23px; }
    .divider { width: 2px; height: 36px; margin-inline: -4px; background: #9a9a9a; }
    .tray { display: flex; align-items: center; justify-content: flex-end; padding-right: 22px; line-height: 23px; }
    .caret { margin-right: 15px; }
    .cloud { margin-right: 21px; }
    .mic { margin-right: 30px; }
    .lang { width: 36px; text-align: center; margin-right: 27px; display: block; }
    .status { gap: 12px; margin-right: 22px; }
    .clock { display: block; text-align: right; }
    .lang span, .clock span { display: block; }
  `];

  render() {
    return html`
      <button class="weather">${weatherCloud()}<span><span>26°C</span><span class="sky">Cloudy</span></span></button>
      <div class="apps">${APPS.map(a => html`
        ${a.divided ? html`<span class="divider"></span>` : nothing}
        <button class=${classMap({ app: true, active: a.state === "active" })} aria-label=${a.name}>
          ${a.icon()}
          ${a.state ? html`<span class="mark"></span>` : nothing}
          ${a.badge ? html`<span class="badge">${a.badge}</span>` : nothing}
        </button>`)}</div>
      <div class="tray">
        <button class="caret" aria-label="Show hidden icons">${trayCaret()}</button>
        <button class="cloud" aria-label="OneDrive">${trayCloud()}</button>
        <button class="mic" aria-label="Microphone">${trayMic()}</button>
        <button class="lang"><span>ENG</span><span>IN</span></button>
        <button class="status" aria-label="Network, volume and battery">${trayWifi()}${trayVolume()}${trayBattery()}</button>
        <button class="clock"><span>04:14 PM</span><span>28-06-2022</span></button>
      </div>`;
  }
}

@customElement("app-root")
class AppRoot extends LitElement {
  static styles = [reset, css`
    :host { display: flex; flex-direction: column; min-height: 100vh; background: #fff; color: #1a1a1a; font: 17px/24px "Open Sans", "Noto Sans", sans-serif; }
    .body { display: flex; flex: 1; align-items: stretch; }
    .status-bar { display: flex; align-items: stretch; height: 36px; padding: 0 8px 0 23px; color: #2b4257; }
    .count { display: flex; align-items: center; margin: 0; padding-top: 3px; }
    .rule { width: 1px; height: 16px; margin: 10px 0 0 17px; background: #e4e4e4; }
    .modes { display: flex; margin-left: auto; padding-top: 1px; }
    .modes button { width: 32px; }
    .on { border: 1px solid #3a9cc4; background: #cfe9f5; }
  `];

  render() {
    return html`
      <explorer-header></explorer-header>
      <explorer-address></explorer-address>
      <main class="body">
        <explorer-tree></explorer-tree>
        <explorer-files></explorer-files>
      </main>
      <footer class="status-bar">
        <p class="count">1 item</p><span class="rule"></span>
        <div class="modes">
          <button class="on" aria-label="Details view">${iconDetails()}</button>
          <button aria-label="Large thumbnails">${iconThumbs()}</button>
        </div>
      </footer>
      <desktop-taskbar></desktop-taskbar>`;
  }
}
